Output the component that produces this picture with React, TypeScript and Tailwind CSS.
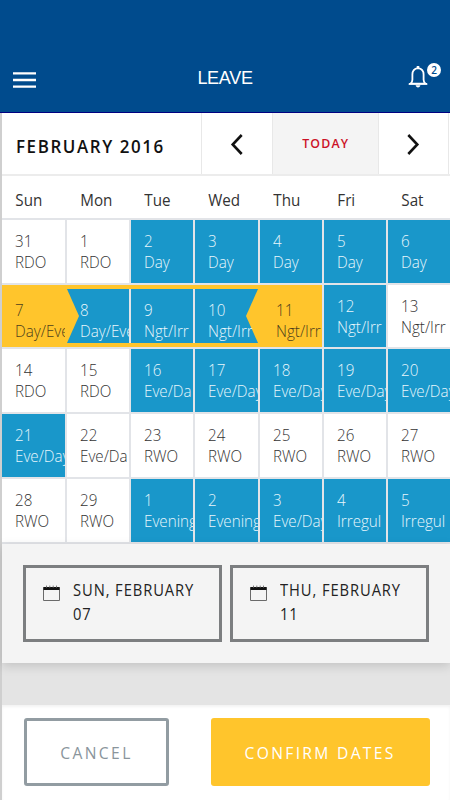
import clsx from "clsx";

type Tone = "plain" | "shift" | "edge" | "range";

interface Day {
  date: string;
  label: string;
  tone: Tone;
  cap?: "left" | "right";
}

const p = (date: string, label: string): Day => ({ date, label, tone: "plain" });
const s = (date: string, label: string): Day => ({ date, label, tone: "shift" });

const weekdays = ["Sun", "Mon", "Tue", "Wed", "Thu", "Fri", "Sat"];

const days: Day[] = [
  p("31", "RDO"), p("1", "RDO"), s("2", "Day"), s("3", "Day"), s("4", "Day"), s("5", "Day"), s("6", "Day"),
  { date: "7", label: "Day/Eve", tone: "edge" },
  { date: "8", label: "Day/Eve", tone: "range", cap: "left" },
  { date: "9", label: "Ngt/Irr", tone: "range" },
  { date: "10", label: "Ngt/Irr", tone: "range", cap: "right" },
  { date: "11", label: "Ngt/Irr", tone: "edge" },
  s("12", "Ngt/Irr"), p("13", "Ngt/Irr"),
  p("14", "RDO"), p("15", "RDO"), s("16", "Eve/Da"), s("17", "Eve/Day"), s("18", "Eve/Day"), s("19", "Eve/Day"), s("20", "Eve/Day"),
  s("21", "Eve/Day"), p("22", "Eve/Da"), p("23", "RWO"), p("24", "RWO"), p("25", "RWO"), p("26", "RWO"), p("27", "RWO"),
  p("28", "RWO"), p("29", "RWO"), s("1", "Evening"), s("2", "Evening"), s("3", "Eve/Day"), s("4", "Irregul"), s("5", "Irregul"),
];

const columns = "grid grid-cols-[65px_64px_64px_65px_64px_64px_62px]";

const BellIcon = () => (
  <svg width="20" height="24" viewBox="0 0 20 24" fill="none" stroke="#fff">
    <path d="M10 3.1C6.4 3.5 4.4 6.2 4.4 9.6v5.2c0 1.7-.8 2.9-1.8 3.9h14.8c-1-1-1.8-2.2-1.8-3.9V9.6c0-3.4-2-6.1-5.6-6.5Z" strokeWidth="1.8" />
    <path d="M.8 18.9h18.4" strokeWidth="1.8" />
    <path d="M10 1v2.5" strokeWidth="2.6" />
    <path d="M7.6 20.2h4.8c-.3 1.4-1.2 2.2-2.4 2.2s-2.1-.8-2.4-2.2Z" fill="#fff" stroke="none" />
  </svg>
);

const CalendarIcon = () => (
  <svg width="17" height="16" viewBox="0 0 17 16" fill="none" className="shrink-0">
    <path d="M.5 2.5h16v13H.5Z" stroke="#6a6a6a" />
    <path d="M.5 2h16v3H.5Z" fill="#111" />
    <path d="M3.5.6v2M6.8.6v2M10.2.6v2M13.5.6v2" stroke="#777" />
  </svg>
);

const DayCell = ({ day, last }: { day: Day; last: boolean }) => {
  const { date, label, tone, cap } = day;
  const first = date === "7";
  return (
    <div
      className={clsx(
        "relative h-full min-w-0",
        !last && "pr-[2px]",
        tone === "range" && "border-y-4 border-[#ffc52c]",
        cap === "right" || first ? "bg-[#ffc52c]" : "bg-[#e2e4e8]",
      )}
    >
      <div
        className={clsx(
          "h-full overflow-hidden whitespace-nowrap text-[16.5px] font-light leading-[21px]",
          tone === "plain" && "bg-white text-[#333]",
          (tone === "shift" || tone === "range") && "bg-[#1997ca] text-[#e8f6fc]",
          tone === "edge" && "bg-[#ffc52c] text-[#4d3f1c]",
          tone === "edge" ? "pt-[14px]" : "pt-[10px]",
          tone === "edge" && !first ? "pl-[16px]" : "pl-[13.4px]",
        )}
      >
        {cap && (
          <svg
            className={clsx("absolute top-0", cap === "left" ? "left-0" : "right-[2px] -scale-x-100")}
            width="12"
            height="54"
            viewBox="0 0 12 54"
          >
            <path d="M0 0L12 27L0 54Z" fill="#ffc52c" />
          </svg>
        )}
        <div className="relative origin-left scale-x-[0.92]">{date}</div>
        <div className="relative origin-left scale-x-[0.92]">{label}</div>
      </div>
    </div>
  );
};

const DateBox = ({ month, day }: { month: string; day: string }) => (
  <div className="flex h-[77px] w-[199px] gap-[13px] border-3 border-[#7c7e80] pl-[17px] pt-[10px]">
    <div className="pt-[7px]">
      <CalendarIcon />
    </div>
    <div className="whitespace-nowrap text-[16px] leading-6 text-[#222]">
      <div className="origin-left scale-x-[0.92] tracking-[1px]">{month}</div>
      <div className="origin-left scale-x-[0.92] tracking-[1px]">{day}</div>
    </div>
  </div>
);

export default function App() {
  return (
    <div className="h-[800px] w-[450px] overflow-hidden bg-white font-['Open_Sans','Noto_Sans',sans-serif]">
      <header className="grid h-[113px] grid-cols-[1fr_auto_1fr] items-end border-b border-[#000080] bg-[#004b8d] pb-[20px] pl-[13px] pr-[13px]">
        <svg className="mb-[3px]" width="23" height="18" viewBox="0 0 23 18">
          <path d="M0 2.4h23M0 9h23M0 15.6h23" stroke="#fff" strokeWidth="2.4" />
        </svg>
        <h1 className="font-['Liberation_Sans',Arial,sans-serif] text-[18px] leading-7 tracking-[-0.3px] text-white">LEAVE</h1>
        <div className="relative -mr-[4px] h-7 w-[33px] justify-self-end">
          <div className="pt-px">
            <BellIcon />
          </div>
          <span className="absolute -top-px right-0 flex size-[14px] items-center justify-center rounded-full bg-white text-[10px] font-semibold leading-none text-[#004b8d]">
            2
          </span>
        </div>
      </header>

      <main className="h-[687px] border-l-2 border-[#cfcfcf]">
        <div className="flex h-[63px] border-b-2 border-[#ececec] text-[#111]">
          <div className="flex w-[200px] items-center border-r border-[#e8e8e8] pl-[13.5px] pt-[5px]">
            <h2 className="origin-left scale-x-[0.94] whitespace-nowrap text-[18px] font-semibold tracking-[1.7px]">FEBRUARY 2016</h2>
          </div>
          <button className="flex w-[70px] items-center justify-center">
            <svg width="14" height="22" viewBox="0 0 14 22" fill="none" stroke="#111" strokeWidth="2.6">
              <path d="M11.7 2L2.7 11.5l9 9.5" />
            </svg>
          </button>
          <button className="flex w-[107px] items-center justify-center border-x border-[#e8e8e8] bg-[#f4f4f4] text-[13px] font-semibold text-[#cc1127]">
            <span className="scale-x-[0.95] pt-px tracking-[1.2px]">TODAY</span>
          </button>
          <button className="flex w-[69px] items-center justify-center">
            <svg width="14" height="22" viewBox="0 0 14 22" fill="none" stroke="#111" strokeWidth="2.6">
              <path d="M1.3 2l9 9.5-9 9.5" />
            </svg>
          </button>
          <div className="flex-1 border-l border-[#e8e8e8]" />
        </div>

        <div className={clsx(columns, "h-[42px] items-center text-[16px] text-[#333]")}>
          {weekdays.map((d) => (
            <div key={d} className="origin-left scale-x-[0.95] pl-[14px] pt-[6px]">
              {d}
            </div>
          ))}
        </div>

        <div
          className={clsx(
            columns,
            "grid-rows-[63px_62px_63px_63px_63px] gap-y-[2px] border-y-2 border-[#e2e4e8] bg-[#e2e4e8]",
          )}
        >
          {days.map((day, i) => (
            <DayCell key={i} day={day} last={i % 7 === 6} />
          ))}
        </div>

        <div className="relative flex h-[119px] gap-[8px] bg-[#f4f4f4] pl-[21px] pt-[21px] shadow-[0_3px_10px_rgba(0,0,0,0.15)]">
          <DateBox month="SUN, FEBRUARY" day="07" />
          <DateBox month="THU, FEBRUARY" day="11" />
        </div>
        <div className="h-[42px] bg-[#e4e4e4]" />

        <footer className="flex h-[95px] justify-between bg-white pl-[22px] pr-[20px] pt-[13px] shadow-[inset_0_2px_3px_rgba(0,0,0,0.05)]">
          <button className="h-[68px] w-[145px] rounded-[3px] border-3 border-[#929ca2] text-[17px] text-[#8a959c]">
            <span className="inline-block scale-x-[0.92] pt-px tracking-[2.6px]">CANCEL</span>
          </button>
          <button className="h-[68px] w-[219px] rounded-[3px] bg-[#ffc52c] text-[17px] font-medium text-white">
            <span className="inline-block scale-x-[0.92] pt-px tracking-[2.5px]">CONFIRM DATES</span>
          </button>
        </footer>
      </main>
    </div>
  );
}
